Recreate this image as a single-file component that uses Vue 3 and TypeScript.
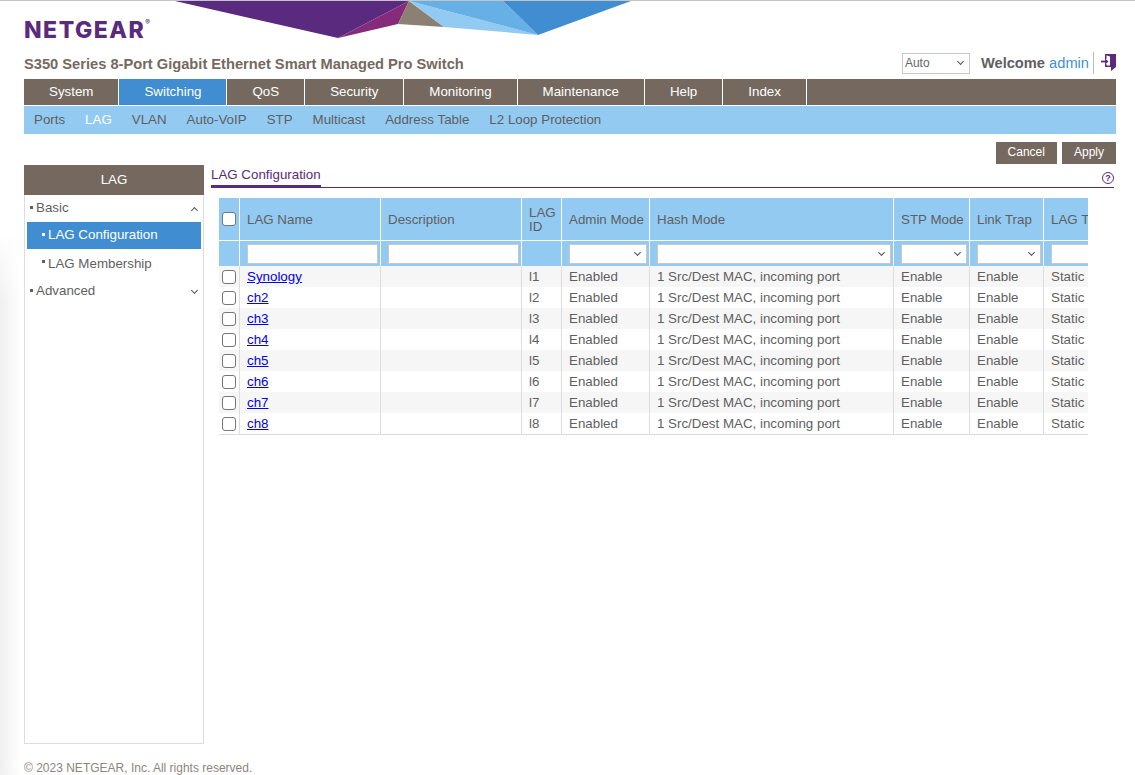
<script setup lang="ts">
const navItems = ['System', 'Switching', 'QoS', 'Security', 'Monitoring', 'Maintenance', 'Help', 'Index']
const subItems = ['Ports', 'LAG', 'VLAN', 'Auto-VoIP', 'STP', 'Multicast', 'Address Table', 'L2 Loop Protection']
const names = ['Synology', 'ch2', 'ch3', 'ch4', 'ch5', 'ch6', 'ch7', 'ch8']
const rows = names.map((name, i) => ({ name, id: `l${i + 1}` }))
</script>

<template>
  <div class="page">
    <div class="edge"></div>
    <svg class="banner" width="460" height="38" viewBox="0 0 460 38">
      <polygon points="1,0 235,0 164,37" fill="#5a2a7e" />
      <polygon points="164,37 235,0 224,23" fill="#862b7b" />
      <polygon points="235,0 224,23 270,26" fill="#8b8072" />
      <polygon points="235,0 270,26 364,34" fill="#93caf2" />
      <polygon points="235,0 329,0 364,34" fill="#67b0e6" />
      <polygon points="329,0 457,0 364,34" fill="#408dd2" />
    </svg>
    <div class="logo">NETGEAR<sup>®</sup></div>

    <div class="title-row">
      <div class="title">S350 Series 8-Port Gigabit Ethernet Smart Managed Pro Switch</div>
      <div class="user">
        <div class="select lang">Auto<i class="chev"></i></div>
        <div class="welcome">Welcome <span>admin</span></div>
        <svg class="logout" width="15" height="17" viewBox="0 0 15 17">
          <path d="M4 0h11v13l-5 4v-4H4v-3h1.500v1.500H9V2.500L6 1.500H5.500V5H4z" fill="#5a2a7e" />
          <path d="M0 7.500h5" fill="none" stroke="#5a2a7e" stroke-width="1.800" />
          <path d="M4 4.500l3.500 3-3.500 3z" fill="#5a2a7e" />
        </svg>
      </div>
    </div>

    <nav class="nav">
      <a v-for="item in navItems" :key="item" :class="{ active: item === 'Switching' }">{{ item }}</a>
    </nav>
    <nav class="subnav">
      <a v-for="item in subItems" :key="item" :class="{ active: item === 'LAG' }">{{ item }}</a>
    </nav>

    <div class="actions">
      <button type="button">Cancel</button>
      <button type="button">Apply</button>
    </div>

    <div class="main">
      <aside class="side">
        <div class="side-head">LAG</div>
        <div class="side-body">
          <div class="side-item top"><i class="dot"></i>Basic<i class="caret up"></i></div>
          <div class="side-item sub active"><i class="dot"></i>LAG Configuration</div>
          <div class="side-item sub second"><i class="dot raised"></i>LAG Membership</div>
          <div class="side-item top last"><i class="dot"></i>Advanced<i class="caret"></i></div>
        </div>
      </aside>

      <section class="content">
        <div class="tabs">
          <span class="tab">LAG Configuration</span>
          <span class="help">?</span>
        </div>
        <div class="table-wrap">
          <table>
            <colgroup>
              <col style="width: 21px" />
              <col style="width: 141px" />
              <col style="width: 141px" />
              <col style="width: 40px" />
              <col style="width: 88px" />
              <col style="width: 244px" />
              <col style="width: 76px" />
              <col style="width: 74px" />
              <col style="width: 90px" />
            </colgroup>
            <thead>
              <tr class="head">
                <th class="check"><span class="box"></span></th>
                <th>LAG Name</th>
                <th>Description</th>
                <th>LAG<br />ID</th>
                <th>Admin Mode</th>
                <th>Hash Mode</th>
                <th>STP Mode</th>
                <th>Link Trap</th>
                <th>LAG Type</th>
              </tr>
              <tr class="filter">
                <th></th>
                <th><span class="field"></span></th>
                <th><span class="field"></span></th>
                <th></th>
                <th><span class="field"><i class="chev"></i></span></th>
                <th><span class="field"><i class="chev"></i></span></th>
                <th><span class="field"><i class="chev"></i></span></th>
                <th><span class="field"><i class="chev"></i></span></th>
                <th><span class="field"></span></th>
              </tr>
            </thead>
            <tbody>
              <tr v-for="row in rows" :key="row.id">
                <td class="check"><span class="box"></span></td>
                <td><a href="#">{{ row.name }}</a></td>
                <td></td>
                <td>{{ row.id }}</td>
                <td>Enabled</td>
                <td>1 Src/Dest MAC, incoming port</td>
                <td>Enable</td>
                <td>Enable</td>
                <td>Static</td>
              </tr>
            </tbody>
          </table>
        </div>
      </section>
    </div>

    <footer class="foot">© 2023 NETGEAR, Inc. All rights reserved.</footer>
  </div>
</template>

<style>
html, body { margin: 0; background: #fff; }
</style>

<style scoped>
.page {
  position: relative;
  box-sizing: border-box;
  height: 775px;
  padding: 0 19px 0 24px;
  border-top: 1px solid #c4c4c4;
  overflow: hidden;
  font-family: "Liberation Sans", Arial, sans-serif;
  font-size: 13.33px;
  color: #666;
  background: #fff;
}

/* soft grey fade on the left side of the page */
.edge {
  position: absolute;
  left: 0;
  top: 230px;
  bottom: 0;
  width: 20px;
  background: linear-gradient(90deg, #f0f0f0, #fff);
  -webkit-mask-image: linear-gradient(180deg, transparent, #000 70px);
  mask-image: linear-gradient(180deg, transparent, #000 70px);
}

.banner {
  position: absolute;
  left: 174px;
  top: 0;
}

.logo {
  box-sizing: border-box;
  height: 50px;
  padding-top: 15px;
  color: #5a2a7e;
  font-family: Inter, "Liberation Sans", sans-serif;
  font-size: 23px;
  line-height: 28px;
  font-weight: 800;
  letter-spacing: 1.5px;
}

.logo sup {
  font-size: 7px;
  line-height: 0;
  font-weight: 400;
  letter-spacing: 0;
  vertical-align: 13px;
}

.title-row {
  display: flex;
  justify-content: space-between;
  align-items: center;
  box-sizing: border-box;
  height: 28px;
  padding-bottom: 4px;
}

.title {
  padding-top: 2px;
  color: #75695f;
  font-size: 14.67px;
  font-weight: 700;
}

.user {
  display: flex;
  align-items: center;
}

.select {
  position: relative;
  box-sizing: border-box;
  width: 68px;
  height: 21px;
  padding-left: 2px;
  border: 1px solid #c8c8c8;
  font-size: 12px;
  line-height: 19px;
}

.chev {
  position: absolute;
  right: 6px;
  top: 50%;
  width: 4px;
  height: 4px;
  margin-top: -4px;
  border-right: 1px solid #555;
  border-bottom: 1px solid #555;
  transform: rotate(45deg);
}

.welcome {
  margin-left: 11px;
  padding-right: 4px;
  border-right: 1px solid #bbb;
  color: #5f5f5f;
  font-size: 14.67px;
  font-weight: 700;
  line-height: 22px;
}

.welcome span {
  color: #4390d5;
  font-weight: 400;
}

.logout {
  margin: -1px 0 0 7px;
}

.nav {
  display: flex;
  height: 26px;
  background: #75695f;
}

.nav a {
  padding: 0 25px;
  border-right: 1px solid #fff;
  color: #fff;
  line-height: 25px;
}

.nav a.active {
  background: #408dd2;
}

.subnav {
  display: flex;
  gap: 20px;
  height: 28px;
  margin-top: 1px;
  padding-left: 10px;
  background: #93caf2;
  line-height: 28px;
}

.subnav a {
  color: #5f5f5f;
}

.subnav a.active {
  color: #fff;
}

.actions {
  display: flex;
  justify-content: flex-end;
  gap: 5px;
  margin-top: 8px;
}

.actions button {
  height: 22px;
  padding: 0 12px 2px;
  border: 0;
  background: #75695f;
  color: #fff;
  font: 12px "Liberation Sans", Arial, sans-serif;
}

.main {
  display: flex;
  align-items: flex-start;
  margin-top: 1px;
}

.side {
  flex: none;
  width: 180px;
  margin-right: 7px;
}

.side-head {
  height: 30px;
  background: #75695f;
  color: #fff;
  line-height: 30px;
  text-align: center;
}

.side-body {
  box-sizing: border-box;
  height: 549px;
  padding: 0 2px;
  border: 1px solid #ddd;
  border-top: 0;
  background: #fff;
}

.side-item {
  position: relative;
  display: flex;
  align-items: center;
  color: #5f5f5f;
}

.side-item.top {
  height: 27px;
  padding: 0 0 2px 3px;
  box-sizing: border-box;
}

.side-item.sub {
  box-sizing: border-box;
  height: 27px;
  padding: 0 0 2px 15px;
}

.side-item.second {
  height: 31px;
}

.side-item.last {
  height: 23px;
}

.side-item.active {
  background: #408dd2;
  color: #fff;
}

.dot {
  width: 3px;
  height: 3px;
  margin-right: 3px;
  background: currentColor;
}

.dot.raised {
  margin-top: -5px;
}

.caret {
  position: absolute;
  right: 4px;
  top: 50%;
  width: 4px;
  height: 4px;
  margin-top: -4px;
  border-right: 1px solid #555;
  border-bottom: 1px solid #555;
  transform: rotate(45deg);
}

.caret.up {
  margin-top: -1px;
  transform: rotate(225deg);
}

.content {
  flex: 1;
  min-width: 0;
}

.tabs {
  display: flex;
  justify-content: space-between;
  align-items: flex-start;
  height: 22px;
  margin-right: 2px;
  border-bottom: 1px solid #5a2a7e;
}

.tab {
  height: 20px;
  border-bottom: 2px solid #5a2a7e;
  color: #5a2a7e;
  line-height: 20px;
}

.help {
  box-sizing: border-box;
  width: 12px;
  height: 12px;
  margin-top: 7px;
  border: 1px solid #5a2a7e;
  border-radius: 50%;
  color: #5a2a7e;
  font-size: 9px;
  font-weight: 700;
  line-height: 10px;
  text-align: center;
}

.table-wrap {
  width: 869px;
  margin: 10px 0 0 8px;
  overflow: hidden;
}

table {
  width: 915px;
  table-layout: fixed;
  border-collapse: separate;
  border-spacing: 0;
}

th {
  box-sizing: border-box;
  padding: 0 0 0 7px;
  border-right: 1px solid #fff;
  border-bottom: 1px solid #fff;
  background: #93caf2;
  color: #5f5f5f;
  font-weight: 400;
  text-align: left;
  line-height: 14px;
}

.head th {
  height: 43px;
  padding-top: 1px;
}

.filter th {
  height: 25px;
  padding: 0 0 0 7px;
  border-bottom: 0;
}

.field {
  position: relative;
  display: block;
  box-sizing: border-box;
  width: calc(100% - 2px);
  height: 20px;
  border: 1px solid #c8c8c8;
  background: #fff;
}

td {
  box-sizing: border-box;
  height: 21px;
  padding: 0 0 0 7px;
  border-right: 1px solid #ddd;
  color: #5f5f5f;
  line-height: 21px;
  white-space: nowrap;
}

tbody tr:nth-child(odd) td {
  background: #f6f6f6;
}

tbody tr:last-child td {
  border-bottom: 1px solid #ddd;
}

th.check,
td.check {
  padding: 0 0 0 3px;
}

.box {
  display: block;
  box-sizing: border-box;
  width: 14px;
  height: 14px;
  border: 1px solid #767676;
  border-radius: 3px;
  background: #fff;
}

td a {
  color: #0000ee;
}

.foot {
  margin-top: 17px;
  font-size: 12px;
  color: #8f857d;
}
</style>
